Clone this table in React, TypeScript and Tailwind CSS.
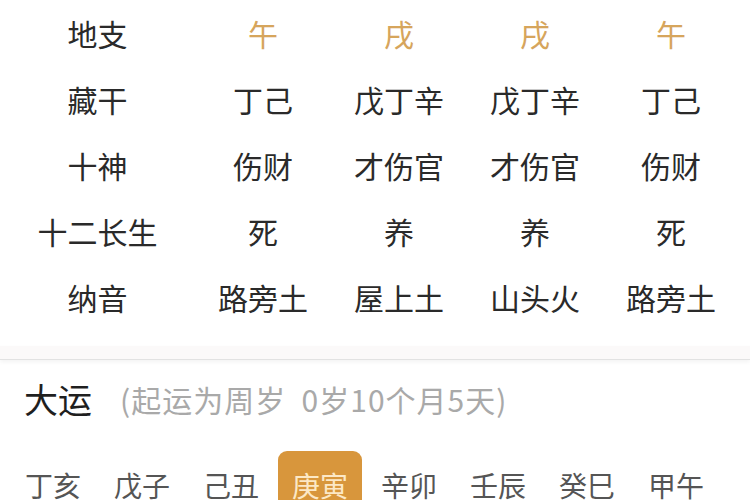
import React from "react";

const FONT = { fontFamily: '"Noto Sans CJK SC", "Noto Sans", sans-serif' };

const ROWS: { label: string; values: string[]; accent?: boolean }[] = [
  { label: "地支", values: ["午", "戌", "戌", "午"], accent: true },
  { label: "藏干", values: ["丁己", "戊丁辛", "戊丁辛", "丁己"] },
  { label: "十神", values: ["伤财", "才伤官", "才伤官", "伤财"] },
  { label: "十二长生", values: ["死", "养", "养", "死"] },
  { label: "纳音", values: ["路旁土", "屋上土", "山头火", "路旁土"] },
];

const DAYUN = ["丁亥", "戊子", "己丑", "庚寅", "辛卯", "壬辰", "癸巳", "甲午"];
const CURRENT = "庚寅";

export default function App() {
  return (
    <div className="h-[500px] w-[750px] overflow-hidden bg-white" style={FONT}>
      {/* pillar table */}
      <div className="grid grid-cols-[195px_repeat(4,136px)]">
        {ROWS.map((row) => (
          <React.Fragment key={row.label}>
            <div className="flex h-[66px] items-center justify-center text-[30px] text-[#2a2a2a]">
              {row.label}
            </div>
            {row.values.map((v, i) => (
              <div
                key={i}
                className={
                  "flex h-[66px] items-center justify-center text-[30px] " +
                  (row.accent ? "text-[#d6a55c]" : "text-[#2a2a2a]")
                }
              >
                {v}
              </div>
            ))}
          </React.Fragment>
        ))}
      </div>

      {/* divider */}
      <div className="mt-[16px] h-[14px] border-b border-[#e2e2e2] bg-[#fbf9f9] shadow-[0_2px_4px_rgba(0,0,0,0.05)]" />

      {/* da yun */}
      <div className="flex items-center pt-[19px] pl-[24px] leading-[40px]">
        <span className="text-[34px] text-[#1f1f1f]">大运</span>
        <span className="ml-[28px] whitespace-pre text-[30px] tracking-[1px] text-[#a9a9a9]">(起运为周岁  0岁10个月5天)</span>
      </div>

      <div className="mt-[32px] flex gap-[5px] pl-[11px]">
        {DAYUN.map((d) => (
          <div
            key={d}
            className={
              "rounded-[9px] px-[14px] pt-[14px] pb-[8px] text-[28px] leading-[40px] " +
              (d === CURRENT ? "bg-[#d8963c] text-[#fce8c6]" : "text-[#555555]")
            }
          >
            {d}
          </div>
        ))}
      </div>
    </div>
  );
}
